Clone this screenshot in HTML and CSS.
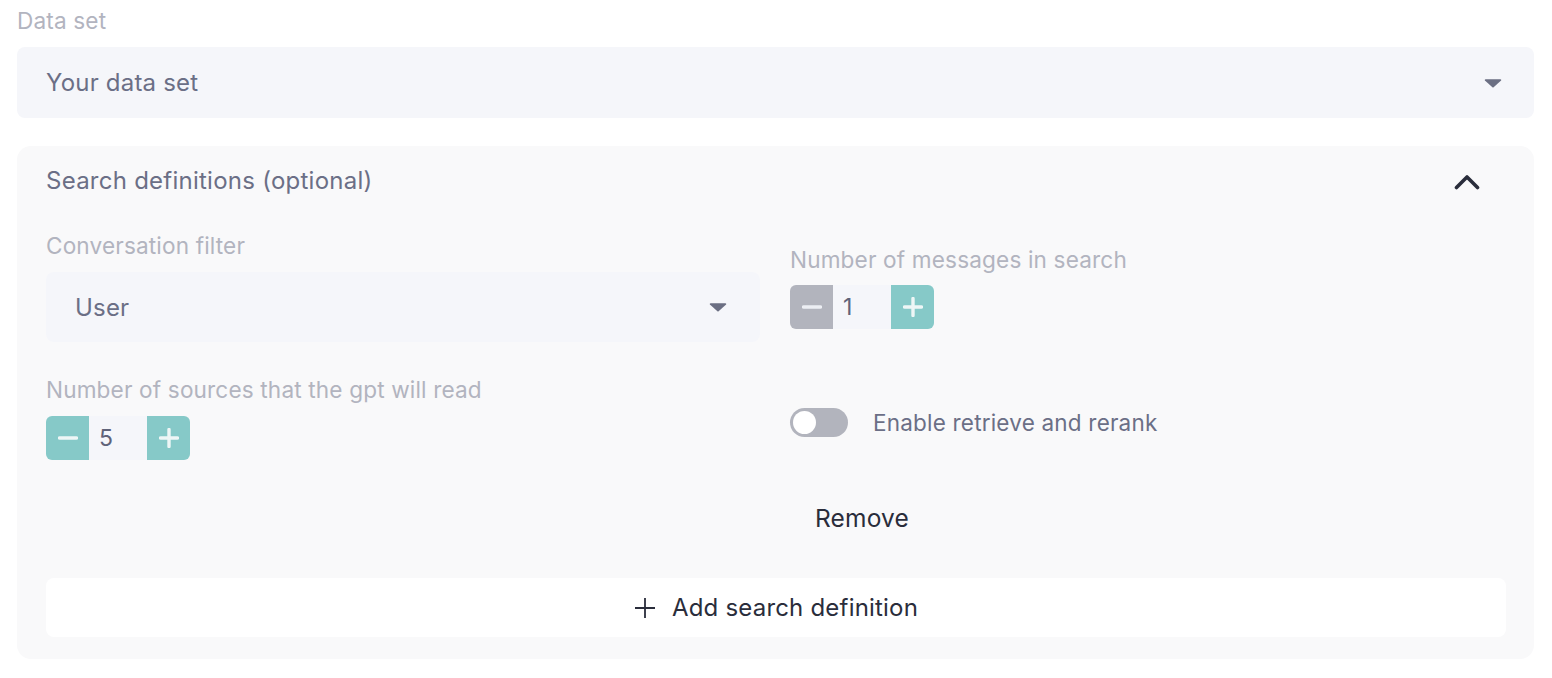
FILE: index.html
```html
<!DOCTYPE html>
<html lang="en">
<head>
<meta charset="utf-8">
<title>Search definitions</title>
<link rel="stylesheet" href="styles.css">
</head>
<body>
<div class="page">
  <div class="field-label">Data set</div>
  <div class="select select-wide">
    <span class="select-value">Your data set</span>
    <svg class="caret" width="18" height="10" viewBox="0 0 18 10"><path d="M1.5 1.2h15a.8.8 0 0 1 .6 1.3l-7.5 6.8a.9.9 0 0 1-1.2 0L.9 2.5a.8.8 0 0 1 .6-1.3z" fill="#6b6f83"/></svg>
  </div>

  <section class="panel">
    <div class="panel-head">
      <span class="panel-title">Search definitions (optional)</span>
      <svg class="chevron" width="26" height="16" viewBox="0 0 26 16"><path d="M2.5 13.5L13 3l10.5 10.5" fill="none" stroke="#2a2d3b" stroke-width="3.6" stroke-linecap="round" stroke-linejoin="round"/></svg>
    </div>

    <div class="grid">
      <div class="cell">
        <div class="field-label">Conversation filter</div>
        <div class="select select-inner">
          <span class="select-value">User</span>
          <svg class="caret" width="18" height="10" viewBox="0 0 18 10"><path d="M1.5 1.2h15a.8.8 0 0 1 .6 1.3l-7.5 6.8a.9.9 0 0 1-1.2 0L.9 2.5a.8.8 0 0 1 .6-1.3z" fill="#6b6f83"/></svg>
        </div>
      </div>
      <div class="cell">
        <div class="field-label label-tight">Number of messages in search</div>
        <div class="stepper">
          <span class="step-btn step-off"><svg width="20" height="20" viewBox="0 0 20 20"><path d="M1.5 10h17" stroke="#eceef3" stroke-width="3.4" stroke-linecap="round"/></svg></span>
          <span class="step-val">1</span>
          <span class="step-btn"><svg width="20" height="20" viewBox="0 0 20 20"><path d="M1.5 10h17M10 1.5v17" stroke="#eef6f6" stroke-width="3.4" stroke-linecap="round"/></svg></span>
        </div>
      </div>

      <div class="cell">
        <div class="field-label">Number of sources that the gpt will read</div>
        <div class="stepper">
          <span class="step-btn"><svg width="20" height="20" viewBox="0 0 20 20"><path d="M1.5 10h17" stroke="#eef6f6" stroke-width="3.4" stroke-linecap="round"/></svg></span>
          <span class="step-val">5</span>
          <span class="step-btn"><svg width="20" height="20" viewBox="0 0 20 20"><path d="M1.5 10h17M10 1.5v17" stroke="#eef6f6" stroke-width="3.4" stroke-linecap="round"/></svg></span>
        </div>
      </div>
      <div class="cell cell-toggle">
        <span class="toggle"><span class="knob"></span></span>
        <span class="toggle-label">Enable retrieve and rerank</span>
      </div>
    </div>

    <div class="remove-row">
      <span class="remove">Remove</span>
    </div>

    <div class="add-btn">
      <svg width="22" height="22" viewBox="0 0 22 22"><path d="M1 11h20M11 1v20" stroke="#2a2d3b" stroke-width="1.8"/></svg>
      <span>Add search definition</span>
    </div>
  </section>
</div>
</body>
</html>
```

FILE: styles.css
```css
* { box-sizing: border-box; }
html, body { margin: 0; padding: 0; background: #ffffff; }
body {
  font-family: Inter, "Open Sans", "Noto Sans", sans-serif;
  color: #6b6f86;
}
.page {
  padding: 7px 18px 0 17px;
}
.field-label {
  font-size: 22.6px;
  line-height: 28px;
  color: #b2b4bf;
  margin-bottom: 12px;
  letter-spacing: 0.15px;
}
.label-tight { margin-bottom: 11px; }
.select {
  display: flex;
  align-items: center;
  justify-content: space-between;
  background: #f5f6fa;
  border-radius: 8px;
}
.select-wide {
  height: 71px;
  padding: 0 32px 0 29px;
}
.select-inner {
  height: 70px;
  padding: 0 33px 0 29px;
}
.select-value {
  font-size: 24px;
  color: #6b6f86;
  letter-spacing: 0.2px;
}
.caret { display: block; }

.panel {
  margin-top: 28px;
  background: #f9f9fa;
  border-radius: 14px;
  padding: 18px 28px 22px 29px;
}
.panel-head {
  height: 32px;
  display: flex;
  align-items: center;
  justify-content: space-between;
  padding-right: 26px;
}
.panel-title {
  font-size: 24px;
  color: #6b6f86;
  letter-spacing: 0.25px;
}
.chevron { display: block; margin-top: 4px; }

.grid {
  margin-top: 36px;
  display: grid;
  grid-template-columns: 714px 1fr;
  column-gap: 30px;
  row-gap: 34px;
  align-items: center;
}
.cell-toggle {
  display: flex;
  align-items: center;
  gap: 25px;
  padding-top: 9px;
}
.stepper {
  display: flex;
  height: 44px;
  width: 144px;
  border-radius: 6px;
  overflow: hidden;
}
.step-btn {
  width: 43px;
  display: flex;
  align-items: center;
  justify-content: center;
  background: #86c9c8;
}
.step-btn svg { display: block; }
.step-off { background: #b2b4bd; }
.step-val {
  flex: 1;
  background: #f5f6fa;
  display: flex;
  align-items: center;
  padding-left: 10px;
  font-size: 23px;
  color: #5f6379;
}
.toggle {
  width: 58px;
  height: 29px;
  border-radius: 15px;
  background: #b2b4bd;
  display: flex;
  align-items: center;
  padding-left: 3px;
}
.knob {
  width: 23px;
  height: 23px;
  border-radius: 50%;
  background: #ffffff;
}
.toggle-label {
  font-size: 22.5px;
  color: #6b6f86;
  letter-spacing: 0.2px;
}
.remove-row {
  margin-top: 42px;
  height: 32px;
  display: flex;
  justify-content: center;
  align-items: center;
}
.remove {
  margin-left: 172px;
  font-size: 24.5px;
  color: #2a2d3b;
  letter-spacing: 0.2px;
}
.add-btn {
  margin-top: 44px;
  height: 59px;
  background: #ffffff;
  border-radius: 8px;
  display: flex;
  align-items: center;
  justify-content: center;
  gap: 16px;
  font-size: 24px;
  color: #2a2d3b;
  letter-spacing: 0.2px;
}
.add-btn svg { display: block; }
```
